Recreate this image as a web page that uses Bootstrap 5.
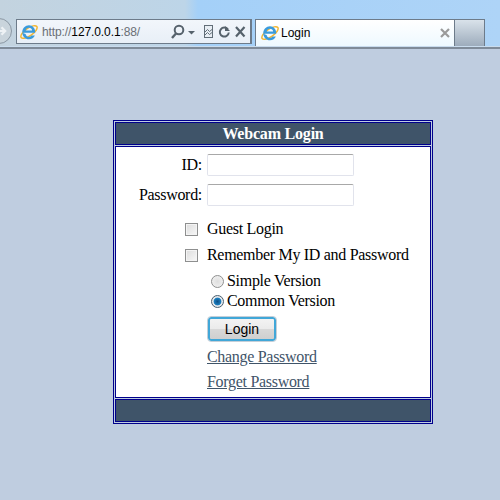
<!DOCTYPE html>
<html lang="en">
<head>
  <meta charset="UTF-8">
  <meta name="viewport" content="width=device-width, initial-scale=1.0">
  <title>Login</title>
  <link href="https://cdn.jsdelivr.net/npm/bootstrap@5.3.1/dist/css/bootstrap.min.css" rel="stylesheet">
  <style>
    html, body { height: 100%; }
    body { background: #bfcde0; font-family: "Liberation Serif", serif; font-size: 16px; color: #000; overflow: hidden; letter-spacing: -0.3px; }

    /* browser chrome */
    .chrome { height: 49px; padding-top: 19px; background: linear-gradient(90deg, #c3d3df 0, #bdd5e8 185px, #a4d0f8 198px, #aed4f7 500px); border-bottom: 2px solid #7f8b99; box-shadow: inset 0 -1px 0 #c9dcee; letter-spacing: 0; }
    .back-btn { width: 26px; height: 26px; margin: -1px 4px 0 -14px; border-radius: 50%; border: 1px solid #8b98a4; background: #c9d4dc; flex: none; }
    .addr { width: 236px; height: 25px; background: linear-gradient(#f2f6fb, #e8eff7); border: 1px solid #6d7b8a; border-right-width: 2px; padding: 0 3px; font: 12px "Liberation Sans", sans-serif; color: #6a6f75; flex: none; }
    .addr b { font-weight: normal; color: #000; }
    .addr-text { margin-left: 4px; letter-spacing: -0.1px; }
    .tab-strip { margin-left: 3px; height: 28px; }
    .ie-tab { width: 200px; height: 27px; background: linear-gradient(#fff, #eef9ff); border: 1px solid #6d7b8a; border-bottom: 0; padding: 0 0 0 5px; font: 12px "Liberation Sans", sans-serif; flex: none; }
    .tab-title { margin-left: 2px; }
    .new-tab { width: 30px; height: 27px; background: linear-gradient(#d9e2ea, #9dacbc); border: 1px solid #6d7b8a; border-left: 0; border-bottom: 0; flex: none; }

    /* login panel */
    .login-outer { width: 320px; margin: 71px 0 0 113px; border: 1px solid #00008b; padding: 1px; }
    .login-bar { height: 23px; background: #3f5469; border: 1px solid #00008b; color: #fff; font-weight: bold; line-height: 22px; letter-spacing: -0.2px; }
    .login-body { height: 252px; margin: 1px 0; border: 1px solid #00008b; background: #fff; }
    .field-row { height: 22px; margin-bottom: 8px; }
    .field-row:first-child { margin-top: 7px; }
    .field-row.last-field { margin-bottom: 10px; }
    .field-label { width: 86px; text-align: right; margin-right: 5px; }
    .field-input { width: 147px; height: 22px; padding: 0 2px; border: 1px solid #e1e3ec; border-top-color: #a8a8a8; border-radius: 2px; background: #fff; outline: 0; }
    .check-row { height: 26px; padding-left: 69px; }
    .check-box { width: 13px; height: 13px; margin: 0 9px 0 0; appearance: none; border: 1px solid #8e8f8f; background: linear-gradient(135deg, #dcdcdc, #f8f8f8); box-shadow: inset 0 0 0 1px #f4f4f4; flex: none; }
    .radio-row { height: 20px; padding-left: 95px; }
    .radio-row.first-radio { margin-top: 3px; }
    .radio-dot { width: 13px; height: 13px; margin: 0 3px 0 0; border-radius: 50%; border: 1px solid #8e8f8f; background: radial-gradient(circle, #dedede 0, #f5f5f5 100%); flex: none; }
    .radio-dot.on { background: radial-gradient(circle, #0c4f86 0, #1b7fc0 45%, #e4e8ec 55%, #e8e8e8 100%); border-color: #4a5f70; }
    .login-btn { width: 68px; height: 24px; margin: 6px 0 0 92px; padding: 0; font: 14px "Liberation Sans", sans-serif; color: #000; border: 2px solid #41a7d8; border-radius: 3px; background: linear-gradient(#f3f3f3 0, #ebebeb 48%, #d8d8d8 52%, #cfcfcf 100%); display: block; outline: 1px solid #c5cfd8; }
    .pw-link { display: block; margin-left: 91px; color: #3f5469; height: 25px; line-height: 26px; width: fit-content; }
    .pw-link.first-link { margin-top: 3px; }
  </style>
</head>
<body>

  <!-- Browser toolbar -->
  <div class="chrome d-flex align-items-start">
    <div class="back-btn d-flex align-items-center justify-content-end pe-1">
      <svg width="11" height="12" viewBox="0 0 12 12"><path d="M1 6h9M6 2l4 4-4 4" fill="none" stroke="#eef2f5" stroke-width="2.400"/></svg>
    </div>
    <div class="addr d-flex align-items-center">
      <svg width="18" height="18" viewBox="1 1 16 16">
        <ellipse cx="9" cy="9" rx="8.500" ry="3.400" transform="rotate(-35 9 9)" fill="none" stroke="#f2b632" stroke-width="1.300"/>
        <path d="M3 9.700h11.500c.3-3.800-2.200-6.700-5.500-6.700-3.300 0-6 2.800-6 6.200 0 3.500 2.700 6.300 6 6.300 2.500 0 4.400-1.300 5.200-3.300h-3c-.5.800-1.300 1.100-2.200 1.100-1.600 0-2.800-1.100-3-2.600zM6 7.700c.2-1.300 1.500-2.400 3-2.400s2.600 1 2.800 2.400z" fill="#3a9bdc" fill-rule="evenodd"/>
      </svg>
      <span class="addr-text">http://<b>127.0.0.1</b>:88/</span>
      <svg class="ms-auto" width="77" height="16" viewBox="0 0 77 16">
        <circle cx="9" cy="6" r="4.300" fill="none" stroke="#56626c" stroke-width="2"/><path d="M6 9.500l-4 4.500" stroke="#56626c" stroke-width="2.400"/>
        <path d="M18 7h7l-3.500 3.500z" fill="#56626c"/>
        <rect x="34.500" y="1.500" width="8" height="12" fill="#e8eef4" stroke="#626e78"/><path d="M35 8l2.500-2.500 2 2 2.500-2M35 11l2.500-2.500 2 2 2.500-2" fill="none" stroke="#626e78"/>
        <path d="M58 5.500a4.500 4.500 0 1 0 .8 3" fill="none" stroke="#56626c" stroke-width="2"/><path d="M55 2v5h5z" fill="#56626c"/>
        <path d="M66 3l8.500 9.500M74.500 3l-8.500 9.500" stroke="#56626c" stroke-width="2.200"/>
      </svg>
    </div>
    <div class="tab-strip d-flex">
      <div class="ie-tab d-flex align-items-center">
        <svg width="18" height="18" viewBox="1 1 16 16">
          <ellipse cx="9" cy="9" rx="8.500" ry="3.400" transform="rotate(-35 9 9)" fill="none" stroke="#f2b632" stroke-width="1.300"/>
          <path d="M3 9.700h11.500c.3-3.800-2.200-6.700-5.500-6.700-3.300 0-6 2.800-6 6.200 0 3.500 2.700 6.300 6 6.300 2.500 0 4.400-1.300 5.200-3.300h-3c-.5.800-1.300 1.100-2.200 1.100-1.600 0-2.800-1.100-3-2.600zM6 7.700c.2-1.300 1.500-2.400 3-2.400s2.600 1 2.800 2.400z" fill="#3a9bdc" fill-rule="evenodd"/>
        </svg>
        <span class="tab-title">Login</span>
        <svg class="ms-auto me-1" width="10" height="10" viewBox="0 0 10 10"><path d="M1 1l8 8M9 1l-8 8" stroke="#9a9a9a" stroke-width="2.200"/></svg>
      </div>
      <div class="new-tab"></div>
    </div>
  </div>

  <!-- Webcam login panel -->
  <div class="login-outer">
    <div class="login-bar text-center">Webcam Login</div>
    <div class="login-body">
      <div class="field-row d-flex align-items-center">
        <label class="field-label" for="uid">ID:</label>
        <input class="field-input" id="uid" type="text">
      </div>
      <div class="field-row last-field d-flex align-items-center">
        <label class="field-label" for="pwd">Password:</label>
        <input class="field-input" id="pwd" type="password">
      </div>
      <div class="check-row d-flex align-items-center">
        <input class="check-box" type="checkbox"><span>Guest Login</span>
      </div>
      <div class="check-row d-flex align-items-center">
        <input class="check-box" type="checkbox"><span>Remember My ID and Password</span>
      </div>
      <div class="radio-row first-radio d-flex align-items-center">
        <span class="radio-dot"></span><span>Simple Version</span>
      </div>
      <div class="radio-row d-flex align-items-center">
        <span class="radio-dot on"></span><span>Common Version</span>
      </div>
      <button class="login-btn" type="button">Login</button>
      <a class="pw-link first-link" href="#">Change Password</a>
      <a class="pw-link" href="#">Forget Password</a>
    </div>
    <div class="login-bar"></div>
  </div>

</body>
</html>
